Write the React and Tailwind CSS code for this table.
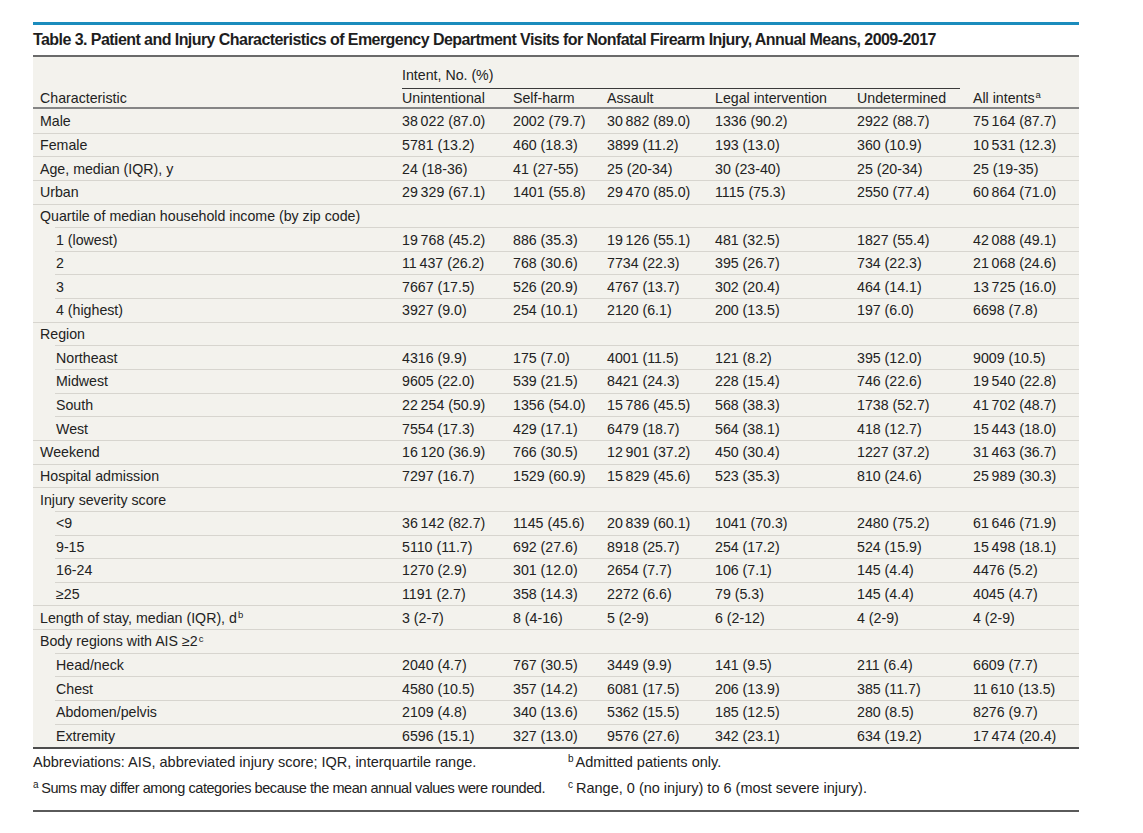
const rows = [
  { label: 'Male', v: ['38 022 (87.0)', '2002 (79.7)', '30 882 (89.0)', '1336 (90.2)', '2922 (88.7)', '75 164 (87.7)'] },
  { label: 'Female', v: ['5781 (13.2)', '460 (18.3)', '3899 (11.2)', '193 (13.0)', '360 (10.9)', '10 531 (12.3)'] },
  { label: 'Age, median (IQR), y', v: ['24 (18-36)', '41 (27-55)', '25 (20-34)', '30 (23-40)', '25 (20-34)', '25 (19-35)'] },
  { label: 'Urban', v: ['29 329 (67.1)', '1401 (55.8)', '29 470 (85.0)', '1115 (75.3)', '2550 (77.4)', '60 864 (71.0)'] },
  { label: 'Quartile of median household income (by zip code)' },
  { label: '1 (lowest)', sub: true, v: ['19 768 (45.2)', '886 (35.3)', '19 126 (55.1)', '481 (32.5)', '1827 (55.4)', '42 088 (49.1)'] },
  { label: '2', sub: true, v: ['11 437 (26.2)', '768 (30.6)', '7734 (22.3)', '395 (26.7)', '734 (22.3)', '21 068 (24.6)'] },
  { label: '3', sub: true, v: ['7667 (17.5)', '526 (20.9)', '4767 (13.7)', '302 (20.4)', '464 (14.1)', '13 725 (16.0)'] },
  { label: '4 (highest)', sub: true, v: ['3927 (9.0)', '254 (10.1)', '2120 (6.1)', '200 (13.5)', '197 (6.0)', '6698 (7.8)'] },
  { label: 'Region' },
  { label: 'Northeast', sub: true, v: ['4316 (9.9)', '175 (7.0)', '4001 (11.5)', '121 (8.2)', '395 (12.0)', '9009 (10.5)'] },
  { label: 'Midwest', sub: true, v: ['9605 (22.0)', '539 (21.5)', '8421 (24.3)', '228 (15.4)', '746 (22.6)', '19 540 (22.8)'] },
  { label: 'South', sub: true, v: ['22 254 (50.9)', '1356 (54.0)', '15 786 (45.5)', '568 (38.3)', '1738 (52.7)', '41 702 (48.7)'] },
  { label: 'West', sub: true, v: ['7554 (17.3)', '429 (17.1)', '6479 (18.7)', '564 (38.1)', '418 (12.7)', '15 443 (18.0)'] },
  { label: 'Weekend', v: ['16 120 (36.9)', '766 (30.5)', '12 901 (37.2)', '450 (30.4)', '1227 (37.2)', '31 463 (36.7)'] },
  { label: 'Hospital admission', v: ['7297 (16.7)', '1529 (60.9)', '15 829 (45.6)', '523 (35.3)', '810 (24.6)', '25 989 (30.3)'] },
  { label: 'Injury severity score' },
  { label: '<9', sub: true, v: ['36 142 (82.7)', '1145 (45.6)', '20 839 (60.1)', '1041 (70.3)', '2480 (75.2)', '61 646 (71.9)'] },
  { label: '9-15', sub: true, v: ['5110 (11.7)', '692 (27.6)', '8918 (25.7)', '254 (17.2)', '524 (15.9)', '15 498 (18.1)'] },
  { label: '16-24', sub: true, v: ['1270 (2.9)', '301 (12.0)', '2654 (7.7)', '106 (7.1)', '145 (4.4)', '4476 (5.2)'] },
  { label: '≥25', sub: true, v: ['1191 (2.7)', '358 (14.3)', '2272 (6.6)', '79 (5.3)', '145 (4.4)', '4045 (4.7)'] },
  { label: 'Length of stay, median (IQR), d', note: 'b', v: ['3 (2-7)', '8 (4-16)', '5 (2-9)', '6 (2-12)', '4 (2-9)', '4 (2-9)'] },
  { label: 'Body regions with AIS ≥2', note: 'c' },
  { label: 'Head/neck', sub: true, v: ['2040 (4.7)', '767 (30.5)', '3449 (9.9)', '141 (9.5)', '211 (6.4)', '6609 (7.7)'] },
  { label: 'Chest', sub: true, v: ['4580 (10.5)', '357 (14.2)', '6081 (17.5)', '206 (13.9)', '385 (11.7)', '11 610 (13.5)'] },
  { label: 'Abdomen/pelvis', sub: true, v: ['2109 (4.8)', '340 (13.6)', '5362 (15.5)', '185 (12.5)', '280 (8.5)', '8276 (9.7)'] },
  { label: 'Extremity', sub: true, v: ['6596 (15.1)', '327 (13.0)', '9576 (27.6)', '342 (23.1)', '634 (19.2)', '17 474 (20.4)'] },
];

// thin space between digit groups, like the journal layout
const fmt = (s) => s.replace(/(\d) (\d)/g, '$1\u2009$2');

const cols = 'grid grid-cols-[369px_111px_94px_108px_142px_116px_1fr]';

function Row({ row, first }) {
  return (
    <div className="flex flex-col h-[23.65px]">
      {!first && <div className={`h-px bg-[#d7d5cf] ${row.sub ? 'ml-[22px]' : ''}`} />}
      <div className={`${cols} flex-1 items-center`}>
        <div className={row.sub ? 'pl-[23px]' : 'pl-[7px]'}>
          {row.label}
          {row.note && <sup className="text-[9.5px] ml-px">{row.note}</sup>}
        </div>
        {(row.v || ['', '', '', '', '', '']).map((val, i) => (
          <div key={i} className="whitespace-nowrap">{fmt(val)}</div>
        ))}
      </div>
    </div>
  );
}

export default function App() {
  return (
    <div className="bg-white min-h-[833px] w-[1143px] pt-[22px] pl-[33px] text-[#222] font-['Liberation_Sans',Arial,sans-serif] text-[14.2px] leading-[18px]">
      <div className="w-[1046px]">
        <div className="h-[3px] bg-[#1b8cbd]" />
        <div className="h-[30px] leading-[30px] text-[16px] font-bold tracking-[-0.035em] text-[#1e1e1e] whitespace-nowrap">
          Table 3. Patient and Injury Characteristics of Emergency Department Visits for Nonfatal Firearm Injury, Annual Means, 2009-2017
        </div>
        <div className="h-[2px] bg-[#6a6a6a]" />

        <div className="bg-[#f3f2ed]">
          <div className={`${cols} pt-[9px] border-b-2 border-[#858585]`}>
            <div className="row-span-2 self-end pl-[7px]">Characteristic</div>
            <div className="col-span-5 mr-[13px] pb-[4px] border-b border-[#3a3a3a]">Intent, No. (%)</div>
            <div className="row-span-2 self-end">
              All intents<sup className="text-[9.5px] ml-px">a</sup>
            </div>
            <div>Unintentional</div>
            <div>Self-harm</div>
            <div>Assault</div>
            <div>Legal intervention</div>
            <div>Undetermined</div>
          </div>

          {rows.map((row, i) => (
            <Row key={i} row={row} first={i === 0} />
          ))}
        </div>
        <div className="h-[2px] bg-[#4d4d4d]" />

        <div className="grid grid-cols-[535px_1fr] leading-[26px] text-[14.5px]">
          <div>Abbreviations: AIS, abbreviated injury score; IQR, interquartile range.</div>
          <div><sup className="text-[10px] mr-[2px]">b</sup>Admitted patients only.</div>
          <div className="tracking-[-0.03em]"><sup className="text-[10px] mr-[3px]">a</sup>Sums may differ among categories because the mean annual values were rounded.</div>
          <div><sup className="text-[10px] mr-[3px]">c</sup>Range, 0 (no injury) to 6 (most severe injury).</div>
        </div>
        <div className="h-[2px] bg-[#5a5a5a] mt-[9px]" />
      </div>
    </div>
  );
}
